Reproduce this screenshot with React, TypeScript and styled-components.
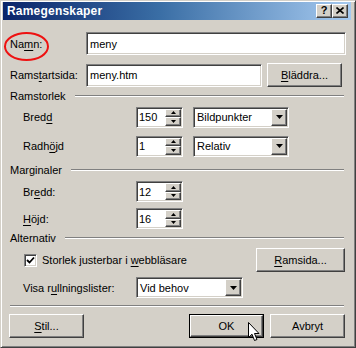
import React from "react";
import styled, { createGlobalStyle } from "styled-components";

const FONT = `"Liberation Sans", Arial, sans-serif`;

const Global = createGlobalStyle`
  html, body { margin: 0; padding: 0; background: #D4D0C8; }
  * { box-sizing: border-box; }
`;

const Window = styled.div`
  position: relative;
  width: 356px;
  height: 348px;
  background: #d4d0c8;
  border: 1px solid;
  border-color: #d4d0c8 #404040 #404040 #d4d0c8;
  box-shadow: inset 1px 1px #ffffff, inset -1px -1px #808080;
  padding: 1px 4px 2px 2px;
  display: flex;
  flex-direction: column;
  font-family: ${FONT};
  font-size: 11px;
  color: #000;
  overflow: hidden;
`;

const TitleBar = styled.div`
  height: 18px;
  flex: none;
  display: flex;
  align-items: center;
  padding: 0 3px 0 4px;
  background: linear-gradient(to right, #0a246a 0%, #3a6ea5 45%, #a6caf0 100%);
`;

const TitleText = styled.div`
  flex: 1;
  color: #fff;
  font-family: "Liberation Sans", Arial, sans-serif;
  font-weight: bold;
  font-size: 12px;
  letter-spacing: 0.2px;
`;

const Raised = `
  background: #d4d0c8;
  border: 1px solid;
  border-color: #ffffff #404040 #404040 #ffffff;
  box-shadow: inset -1px -1px #808080, inset 1px 1px #d4d0c8;
`;

const Sunken = `
  border: 1px solid;
  border-color: #808080 #ffffff #ffffff #808080;
  box-shadow: inset 1px 1px #404040, inset -1px -1px #d4d0c8;
`;

const CaptionButton = styled.div`
  ${Raised}
  width: 16px;
  height: 14px;
  display: flex;
  align-items: center;
  justify-content: center;
  font-family: "Liberation Sans", Arial, sans-serif;
  font-weight: bold;
  font-size: 11px;
  line-height: 1;
  color: #000;
  padding-bottom: 1px;
`;

const Body = styled.div`
  display: flex;
  flex-direction: column;
  flex: 1;
`;

const Row = styled.div<{ $top: number; $h: number; $indent?: number }>`
  display: flex;
  align-items: center;
  margin-top: ${(p) => p.$top}px;
  height: ${(p) => p.$h}px;
  padding-left: ${(p) => p.$indent ?? 7}px;
  flex: none;
`;

const Label = styled.div<{ $w?: number }>`
  width: ${(p) => (p.$w ? `${p.$w}px` : "auto")};
  flex: none;
  white-space: nowrap;
`;

const U = styled.span`
  text-decoration: underline;
  text-underline-offset: 2px;
  text-decoration-thickness: 1px;
`;

const TextField = styled.div<{ $w: number; $h: number }>`
  ${Sunken}
  background: #fff;
  width: ${(p) => p.$w}px;
  height: ${(p) => p.$h}px;
  display: flex;
  align-items: center;
  padding-left: 3px;
  flex: none;
`;

const Button = styled.div<{ $w: number; $h: number; $ml?: number }>`
  ${Raised}
  width: ${(p) => p.$w}px;
  height: ${(p) => p.$h}px;
  margin-left: ${(p) => p.$ml ?? 0}px;
  display: flex;
  align-items: center;
  justify-content: center;
  flex: none;
`;

const DefaultButton = styled.div<{ $w: number; $h: number; $ml?: number }>`
  width: ${(p) => p.$w}px;
  height: ${(p) => p.$h}px;
  margin-left: ${(p) => p.$ml ?? 0}px;
  border: 1px solid #000;
  flex: none;
  display: flex;
`;

const DefaultInner = styled.div`
  ${Raised}
  flex: 1;
  display: flex;
  align-items: center;
  justify-content: center;
`;

const GroupHeader = styled.div<{ $top: number }>`
  display: flex;
  align-items: center;
  margin-top: ${(p) => p.$top}px;
  height: 14px;
  padding-left: 7px;
  padding-right: 7px;
  flex: none;
`;

const Etched = styled.div<{ $ml?: number }>`
  flex: 1;
  height: 2px;
  margin-left: ${(p) => p.$ml ?? 9}px;
  border-top: 1px solid #808080;
  border-bottom: 1px solid #ffffff;
`;

const Separator = styled.div<{ $top: number }>`
  margin: ${(p) => p.$top}px 7px 0 7px;
  height: 2px;
  border-top: 1px solid #808080;
  border-bottom: 1px solid #ffffff;
  flex: none;
`;

const SpinBox = styled.div`
  ${Sunken}
  width: 47px;
  height: 21px;
  display: flex;
  padding: 1px;
  flex: none;
`;

const SpinText = styled.div`
  flex: 1;
  background: #fff;
  display: flex;
  align-items: center;
  padding-left: 1px;
`;

const SpinButtons = styled.div`
  width: 16px;
  display: flex;
  flex-direction: column;
`;

const SpinBtn = styled.div<{ $h: number }>`
  ${Raised}
  height: ${(p) => p.$h}px;
  display: flex;
  align-items: center;
  justify-content: center;
`;

const Select = styled.div<{ $w: number; $ml?: number }>`
  ${Sunken}
  width: ${(p) => p.$w}px;
  height: 21px;
  margin-left: ${(p) => p.$ml ?? 0}px;
  display: flex;
  padding: 1px;
  flex: none;
`;

const SelectText = styled.div`
  flex: 1;
  background: #fff;
  display: flex;
  align-items: center;
  padding-left: 2px;
`;

const DropBtn = styled.div`
  ${Raised}
  width: 16px;
  display: flex;
  align-items: center;
  justify-content: center;
`;

const CheckBox = styled.div`
  ${Sunken}
  width: 13px;
  height: 13px;
  background: #fff;
  display: flex;
  align-items: center;
  justify-content: center;
  flex: none;
`;

const CheckLabel = styled.div`
  margin-left: 5px;
  white-space: nowrap;
`;

const Spacer = styled.div`
  flex: 1;
`;

const Annotation = styled.svg`
  position: absolute;
  left: 2px;
  top: 30px;
  pointer-events: none;
`;

const Cursor = styled.svg`
  position: absolute;
  left: 247px;
  top: 321px;
  pointer-events: none;
`;

const Tri = ({ dir }: { dir: "up" | "down" }) => (
  <svg width="7" height="4" viewBox="0 0 7 4">
    {dir === "down" ? (
      <polygon points="0,0 7,0 3.5,4" fill="#000" />
    ) : (
      <polygon points="0,4 7,4 3.5,0" fill="#000" />
    )}
  </svg>
);

const SmallTri = ({ dir }: { dir: "up" | "down" }) => (
  <svg width="5" height="3" viewBox="0 0 5 3">
    {dir === "down" ? (
      <polygon points="0,0 5,0 2.5,3" fill="#000" />
    ) : (
      <polygon points="0,3 5,3 2.5,0" fill="#000" />
    )}
  </svg>
);

const Spinner = ({ value }: { value: string }) => (
  <SpinBox>
    <SpinText>{value}</SpinText>
    <SpinButtons>
      <SpinBtn $h={10}>
        <SmallTri dir="up" />
      </SpinBtn>
      <SpinBtn $h={9}>
        <SmallTri dir="down" />
      </SpinBtn>
    </SpinButtons>
  </SpinBox>
);

const Dropdown = ({ value, w, ml }: { value: string; w: number; ml?: number }) => (
  <Select $w={w} $ml={ml}>
    <SelectText>{value}</SelectText>
    <DropBtn>
      <Tri dir="down" />
    </DropBtn>
  </Select>
);

export default function App() {
  return (
    <>
      <Global />
      <Window>
        <TitleBar>
          <TitleText>Ramegenskaper</TitleText>
          <CaptionButton>?</CaptionButton>
          <CaptionButton>
            <svg width="8" height="7" viewBox="0 0 8 7">
              <path d="M0.5 0.5 L7.5 6.5 M7.5 0.5 L0.5 6.5" stroke="#000" strokeWidth="1.6" />
            </svg>
          </CaptionButton>
        </TitleBar>
        <Body>
          <Row $top={12} $h={23}>
            <Label $w={76}>
              Na<U>m</U>n:
            </Label>
            <TextField $w={260} $h={23}>meny</TextField>
          </Row>
          <Row $top={8} $h={24}>
            <Label $w={76}>
              Rams<U>t</U>artsida:
            </Label>
            <TextField $w={176} $h={23}>meny.htm</TextField>
            <Button $w={75} $h={24} $ml={5}>
              <span>
                <U>B</U>läddra...
              </span>
            </Button>
          </Row>
          <GroupHeader $top={2}>
            <Label>Ramstorlek</Label>
            <Etched />
          </GroupHeader>
          <Row $top={3} $h={22} $indent={20}>
            <Label $w={113}>
              Bred<U>d</U>
            </Label>
            <Spinner value="150" />
            <Dropdown value="Bildpunkter" w={96} ml={10} />
          </Row>
          <Row $top={7} $h={22} $indent={20}>
            <Label $w={113}>
              Radh<U>ö</U>jd
            </Label>
            <Spinner value="1" />
            <Dropdown value="Relativ" w={96} ml={10} />
          </Row>
          <GroupHeader $top={6}>
            <Label>Marginaler</Label>
            <Etched />
          </GroupHeader>
          <Row $top={4} $h={21} $indent={20}>
            <Label $w={113}>
              Br<U>e</U>dd:
            </Label>
            <Spinner value="12" />
          </Row>
          <Row $top={6} $h={21} $indent={20}>
            <Label $w={113}>
              <U>H</U>öjd:
            </Label>
            <Spinner value="16" />
          </Row>
          <GroupHeader $top={2}>
            <Label>Alternativ</Label>
            <Etched />
          </GroupHeader>
          <Row $top={3} $h={24} $indent={21}>
            <CheckBox>
              <svg width="9" height="9" viewBox="0 0 9 9">
                <path d="M1 4 L3.5 6.5 L8 1.5" stroke="#000" strokeWidth="1.8" fill="none" />
              </svg>
            </CheckBox>
            <CheckLabel>
              Storlek justerbar i <U>w</U>ebbläsare
            </CheckLabel>
            <Spacer />
            <Button $w={89} $h={24}>
              <span>
                <U>R</U>amsida...
              </span>
            </Button>
            <Label $w={6} />
          </Row>
          <Row $top={5} $h={21} $indent={20}>
            <Label $w={113}>
              Visa r<U>u</U>llningslister:
            </Label>
            <Dropdown value="Vid behov" w={107} />
          </Row>
          <Separator $top={7} />
          <Row $top={7} $h={24} $indent={6}>
            <Button $w={75} $h={24}>
              <span>
                <U>S</U>til...
              </span>
            </Button>
            <Spacer />
            <DefaultButton $w={75} $h={24}>
              <DefaultInner>OK</DefaultInner>
            </DefaultButton>
            <Button $w={75} $h={24} $ml={6}>
              Avbryt
            </Button>
            <Label $w={6} />
          </Row>
        </Body>
        <Annotation width="48" height="32" viewBox="0 0 48 32">
          <ellipse cx="23.5" cy="15.5" rx="21.5" ry="13.5" fill="none" stroke="#ee1111" strokeWidth="2" />
        </Annotation>
        <Cursor width="12" height="20" viewBox="0 0 12 20">
          <path
            d="M0.5 0.5 L0.5 15.5 L4 12.2 L6.5 18.5 L9 17.5 L6.5 11.5 L11 11.5 Z"
            fill="#fff"
            stroke="#000"
            strokeWidth="1"
            strokeLinejoin="miter"
          />
        </Cursor>
      </Window>
    </>
  );
}
